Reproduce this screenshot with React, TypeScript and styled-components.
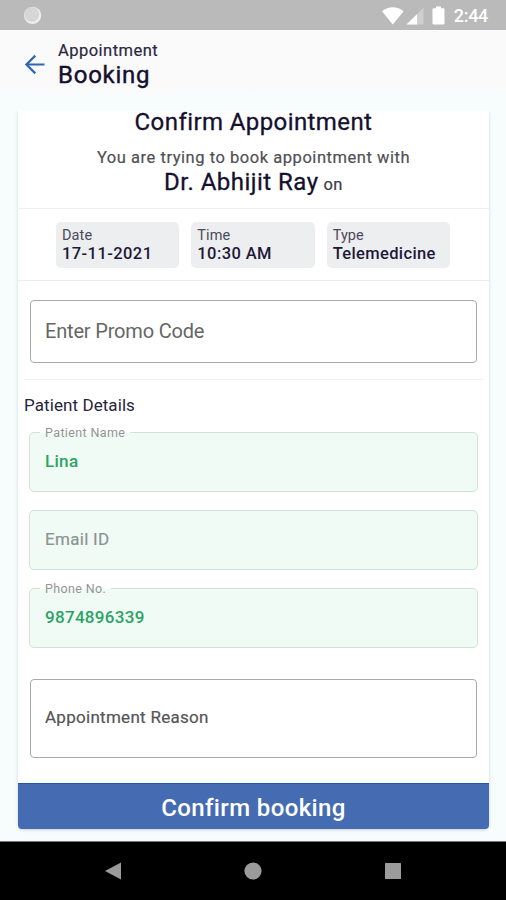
import React from "react";
import styled, { createGlobalStyle } from "styled-components";

const GlobalStyle = createGlobalStyle`
  * { box-sizing: border-box; }
  body { margin: 0; background: #f7fcfd; }
  svg { display: block; }
`;

const Screen = styled.div`
  display: flex;
  flex-direction: column;
  width: 506px;
  height: 900px;
  overflow: hidden;
  background: #f7fcfd;
  font-family: Roboto, sans-serif;
  color: #14102e;
`;

const StatusBar = styled.div`
  display: flex;
  align-items: center;
  justify-content: space-between;
  height: 30px;
  flex: none;
  padding: 1px 18px 0 23px;
  background: #bababa;
`;

const StatusIcons = styled.div`
  display: flex;
  align-items: center;
`;

const Clock = styled.span`
  margin-left: 9px;
  color: #fff;
  font-size: 18px;
  font-weight: 500;
  line-height: 28px;
  letter-spacing: -0.3px;
`;

const Header = styled.header`
  display: flex;
  height: 67px;
  flex: none;
  padding: 11px 0 0 22px;
  background: linear-gradient(#fafafa 88%, #f8fcfd);
`;

const BackButton = styled.button`
  width: 36px;
  height: 28px;
  margin-top: 10px;
  padding: 0;
  border: 0;
  background: none;
`;

const Eyebrow = styled.div`
  font-size: 16.5px;
  line-height: 20px;
  letter-spacing: 0.47px;
  color: #2b2843;
  -webkit-text-stroke: 0.2px currentColor;
`;

const PageTitle = styled.h1`
  margin: 0;
  font-size: 24px;
  line-height: 28px;
  font-weight: 400;
  letter-spacing: 0.75px;
  -webkit-text-stroke: 0.4px currentColor;
`;

const Card = styled.main`
  display: flex;
  flex-direction: column;
  width: 471px;
  height: 718px;
  margin: 14px 0 0 18px;
  flex: none;
  background: #fff;
  border-radius: 0 0 5px 5px;
  box-shadow: 0 1px 3px rgba(60, 70, 75, 0.24);
  clip-path: inset(0 -5px -5px -5px);
`;

const Intro = styled.section`
  height: 98px;
  flex: none;
  border-bottom: 1px solid #efefef;
  text-align: center;
`;

const IntroTitle = styled.h2`
  margin: -3px 0 12px;
  font-size: 24px;
  line-height: 28px;
  font-weight: 400;
  letter-spacing: 0.41px;
  -webkit-text-stroke: 0.3px currentColor;
`;

const IntroText = styled.div`
  font-size: 16.5px;
  line-height: 20px;
  letter-spacing: 0.54px;
  color: #505055;
  -webkit-text-stroke: 0.2px currentColor;
`;

const Doctor = styled.div`
  font-size: 24px;
  line-height: 28px;
  letter-spacing: 0.48px;
  -webkit-text-stroke: 0.3px currentColor;

  small {
    margin-left: -1.5px;
    font-size: 16.5px;
    color: #3c3a48;
    -webkit-text-stroke: 0.2px currentColor;
  }
`;

const Slots = styled.section`
  display: grid;
  grid-template-columns: repeat(3, 1fr);
  gap: 12px;
  height: 72px;
  flex: none;
  padding: 13px 39px 12px 38px;
  border-bottom: 1px solid #ececec;
`;

const Slot = styled.div`
  height: 46px;
  padding: 5px 6px;
  border-radius: 5px;
  background: #edeef0;
`;

const SlotLabel = styled.div`
  font-size: 14.5px;
  line-height: 17px;
  letter-spacing: 0.1px;
  color: #4b4a5a;
`;

const SlotValue = styled.div<{ $spacing: number }>`
  font-size: 16.5px;
  line-height: 20px;
  font-weight: 500;
  letter-spacing: ${(p) => p.$spacing}px;
  color: #1d1938;
`;

const TextBox = styled.div<{ $tall?: boolean }>`
  display: flex;
  align-items: center;
  height: ${(p) => (p.$tall ? 79 : 63)}px;
  flex: none;
  margin: ${(p) => (p.$tall ? "31px 12px 0" : "19px 12px 0")};
  padding: 0 0 ${(p) => (p.$tall ? 3 : 2)}px 14px;
  border: 1px solid #a9a9a9;
  border-radius: 4px;
  font-size: ${(p) => (p.$tall ? 17 : 20)}px;
  letter-spacing: ${(p) => (p.$tall ? 0.28 : -0.18)}px;
  color: ${(p) => (p.$tall ? "#555" : "#666")};
  -webkit-text-stroke: ${(p) => (p.$tall ? 0.2 : 0)}px currentColor;
`;

const Divider = styled.hr`
  width: 460px;
  height: 1px;
  flex: none;
  margin: 16px 0 0 6px;
  border: 0;
  background: #f0f0f0;
`;

const SectionTitle = styled.h3`
  margin: 15px 0 0 6px;
  font-size: 17px;
  line-height: 20px;
  font-weight: 400;
  letter-spacing: 0.08px;
  color: #27243d;
`;

const Fields = styled.div`
  display: grid;
  grid-template-rows: repeat(3, 60px);
  row-gap: 18px;
  margin: 17px 11px 0;
`;

const Field = styled.div`
  position: relative;
  display: flex;
  align-items: center;
  padding: 0 0 2px 15px;
  border: 1px solid #d5e0da;
  border-radius: 5px;
  background: #f0fbf6;
`;

const FieldLabel = styled.span`
  position: absolute;
  top: -8px;
  left: 10px;
  padding: 1px 5px 0;
  font-size: 12.5px;
  line-height: 14px;
  letter-spacing: 0.38px;
  color: #949494;
  background: linear-gradient(#fff 8px, #f0fbf6 8px);
`;

const FieldValue = styled.span`
  font-size: 17px;
  line-height: 20px;
  font-weight: 500;
  letter-spacing: 0.3px;
  color: #2ba463;
`;

const FieldHint = styled(FieldValue)`
  font-weight: 400;
  color: #8c9490;
  -webkit-text-stroke: 0.2px currentColor;
`;

const ConfirmButton = styled.button`
  height: 46px;
  flex: none;
  margin-top: auto;
  padding: 3px 0 0;
  border: 0;
  border-top: 1px solid #2459a3;
  border-radius: 0 0 4px 4px;
  background: #456cb2;
  color: #fff;
  font: 500 24px/28px Roboto, sans-serif;
  letter-spacing: 0.37px;
`;

const NavBar = styled.nav`
  display: grid;
  grid-template-columns: repeat(3, 140px);
  justify-content: center;
  justify-items: center;
  align-items: center;
  height: 59px;
  margin-top: auto;
  flex: none;
  border-top: 1px solid #777;
  background: #000;
`;

const slots = [
  { label: "Date", value: "17-11-2021", spacing: 0.42 },
  { label: "Time", value: "10:30 AM", spacing: 0.4 },
  { label: "Type", value: "Telemedicine", spacing: 0.36 },
];

export default function App() {
  return (
    <Screen>
      <GlobalStyle />
      <StatusBar>
        <svg width="19" height="19" viewBox="0 0 19 19">
          <circle cx="9.6" cy="9.3" r="8.6" fill="#eee" />
          <circle cx="8.8" cy="8.3" r="7.4" fill="#d6d6d6" />
        </svg>
        <StatusIcons>
          <svg width="63" height="20" viewBox="0 0 63 20" fill="#fff">
            <path d="M0 5.2C6.5-.2 15.1-.2 21.6 5.2L10.8 18.5Z" />
            <path d="M41.5 1.8V18.500H24.500Z" opacity=".3" />
            <path d="M35 8.200V18.500H24.500Z" />
            <path d="M54 .5h5v1.700h2.200q1.300 0 1.300 1.300v13.800q0 1.300-1.300 1.300h-9.400q-1.300 0-1.300-1.300V3.500q0-1.300 1.300-1.300H54Z" />
          </svg>
          <Clock>2:44</Clock>
        </StatusIcons>
      </StatusBar>

      <Header>
        <BackButton aria-label="Back">
          <svg width="26" height="28" viewBox="0 0 26 28" fill="none" stroke="#2f66b8" strokeWidth="2.2">
            <path d="M22.500 13.500H5M13.300 4.600L4.400 13.500L13.300 22.400" />
          </svg>
        </BackButton>
        <div>
          <Eyebrow>Appointment</Eyebrow>
          <PageTitle>Booking</PageTitle>
        </div>
      </Header>

      <Card>
        <Intro>
          <IntroTitle>Confirm Appointment</IntroTitle>
          <IntroText>You are trying to book appointment with</IntroText>
          <Doctor>
            Dr. Abhijit Ray <small>on</small>
          </Doctor>
        </Intro>
        <Slots>
          {slots.map((s) => (
            <Slot key={s.label}>
              <SlotLabel>{s.label}</SlotLabel>
              <SlotValue $spacing={s.spacing}>{s.value}</SlotValue>
            </Slot>
          ))}
        </Slots>
        <TextBox>Enter Promo Code</TextBox>
        <Divider />
        <SectionTitle>Patient Details</SectionTitle>
        <Fields>
          <Field>
            <FieldLabel>Patient Name</FieldLabel>
            <FieldValue>Lina</FieldValue>
          </Field>
          <Field>
            <FieldHint>Email ID</FieldHint>
          </Field>
          <Field>
            <FieldLabel>Phone No.</FieldLabel>
            <FieldValue>9874896339</FieldValue>
          </Field>
        </Fields>
        <TextBox $tall>Appointment Reason</TextBox>
        <ConfirmButton>Confirm booking</ConfirmButton>
      </Card>

      <NavBar>
        <svg width="18" height="18" viewBox="0 0 18 18" fill="#9b9b9b">
          <path d="M1 9L17 .5V17.500Z" />
        </svg>
        <svg width="18" height="18" viewBox="0 0 18 18" fill="#9b9b9b">
          <circle cx="9" cy="9" r="8.600" />
        </svg>
        <svg width="18" height="18" viewBox="0 0 18 18" fill="#9b9b9b">
          <rect x="1" y="1" width="16" height="16" rx=".5" />
        </svg>
      </NavBar>
    </Screen>
  );
}
